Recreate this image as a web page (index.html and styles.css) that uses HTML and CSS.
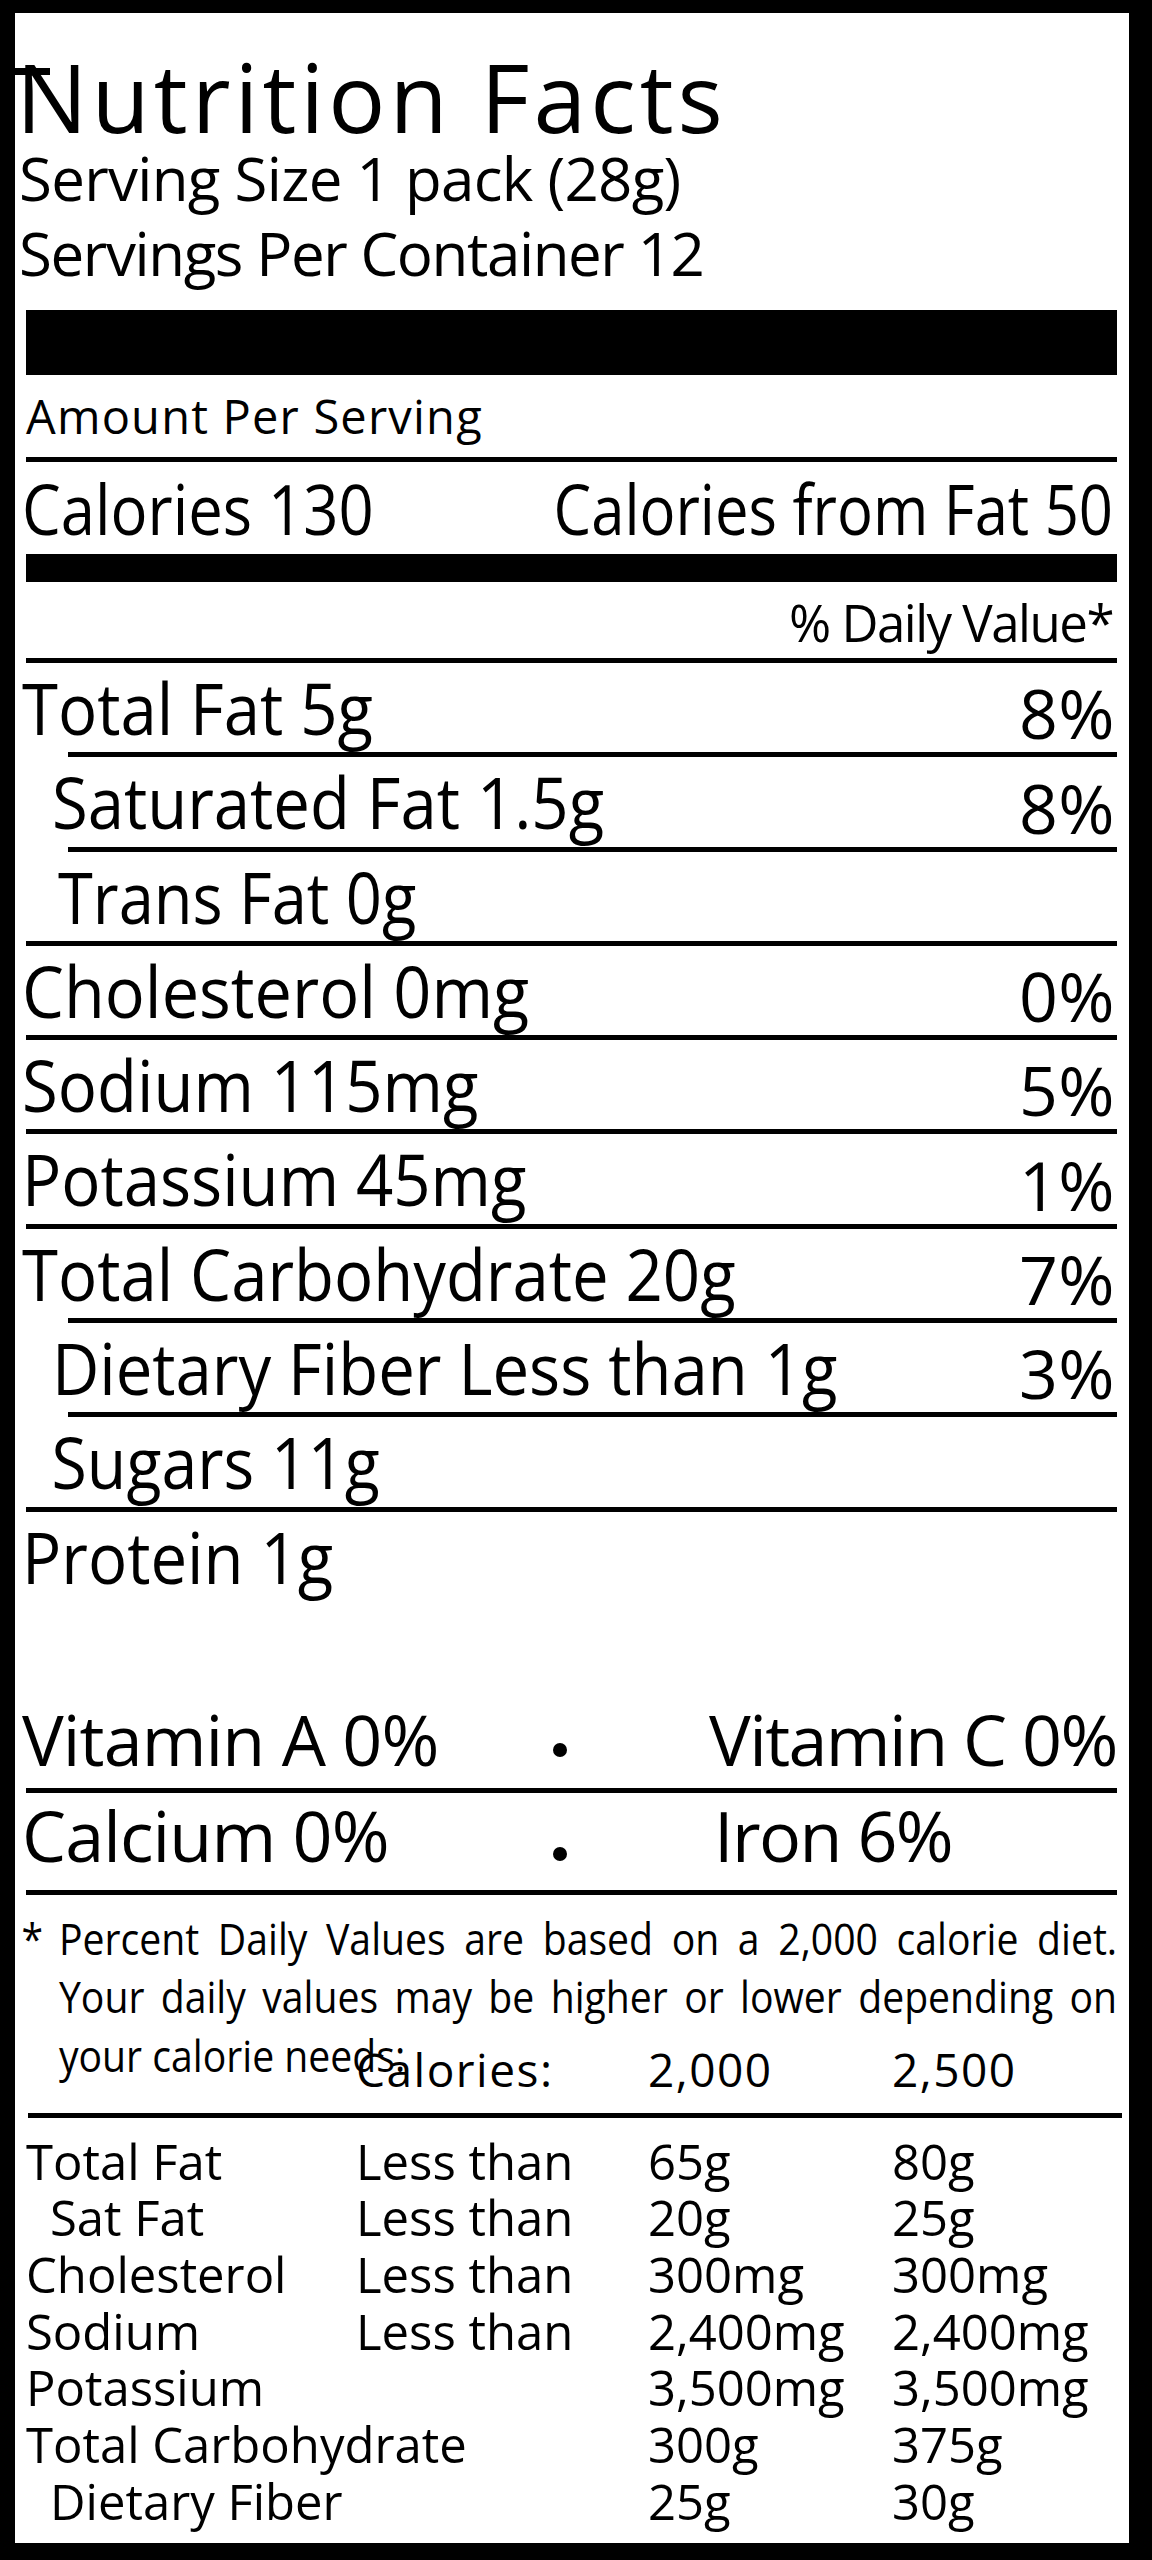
FILE: index.html
```html
<!DOCTYPE html>
<html lang="en">
<head>
<meta charset="utf-8">
<title>Nutrition Facts</title>
<link rel="stylesheet" href="styles.css">
</head>
<body>
<main class="label">
  <h1 class="title">Nutrition Facts</h1>
  <p class="serving serving-size">Serving Size 1 pack (28g)</p>
  <p class="serving serving-count">Servings Per Container 12</p>
  <div class="bar"></div>

  <div class="amount">Amount Per Serving</div>
  <div class="calories">
    <span class="cal-left">Calories 130</span>
    <span class="cal-right">Calories from Fat 50</span>
  </div>
  <div class="dv-head">% Daily Value*</div>

  <ul class="nutrients">
    <li class="row line-ind"><span class="name">Total Fat 5g</span><span class="pct">8%</span></li>
    <li class="row sub line-ind"><span class="name">Saturated Fat 1.5g</span><span class="pct">8%</span></li>
    <li class="row sub"><span class="name n-trans">Trans Fat 0g</span></li>
    <li class="row"><span class="name n-chol">Cholesterol 0mg</span><span class="pct">0%</span></li>
    <li class="row"><span class="name">Sodium 115mg</span><span class="pct">5%</span></li>
    <li class="row"><span class="name">Potassium 45mg</span><span class="pct">1%</span></li>
    <li class="row line-ind"><span class="name">Total Carbohydrate 20g</span><span class="pct">7%</span></li>
    <li class="row sub line-ind"><span class="name">Dietary Fiber Less than 1g</span><span class="pct">3%</span></li>
    <li class="row sub"><span class="name n-sug">Sugars 11g</span></li>
    <li class="row no-line"><span class="name">Protein 1g</span></li>
  </ul>

  <div class="vitamins">
    <div class="vit-row vit-first">
      <span class="vit vit-left">Vitamin A 0%</span>
      <span class="dot dot-mid"></span>
      <span class="vit">Vitamin C 0%</span>
    </div>
    <div class="vit-row vit-second">
      <span class="vit vit-left">Calcium 0%</span>
      <span class="dot dot-low"></span>
      <span class="vit vit-iron">Iron 6%</span>
    </div>
  </div>

  <div class="footnote">
    <p class="fn-line fn-first"><span class="star">*</span>Percent Daily Values are based on a 2,000 calorie diet.</p>
    <p class="fn-line fn-second">Your daily values may be higher or lower depending on</p>
    <p class="fn-line fn-last">your calorie needs:</p>
  </div>

  <div class="cal-head">
    <span></span>
    <span>Calories:</span>
    <span>2,000</span>
    <span>2,500</span>
  </div>
  <div class="rule"></div>

  <div class="dv-table">
    <div class="t-row"><span>Total Fat</span><span>Less than</span><span>65g</span><span>80g</span></div>
    <div class="t-row"><span class="t-ind">Sat Fat</span><span>Less than</span><span>20g</span><span>25g</span></div>
    <div class="t-row"><span>Cholesterol</span><span>Less than</span><span>300mg</span><span>300mg</span></div>
    <div class="t-row"><span>Sodium</span><span>Less than</span><span>2,400mg</span><span>2,400mg</span></div>
    <div class="t-row"><span>Potassium</span><span></span><span>3,500mg</span><span>3,500mg</span></div>
    <div class="t-row"><span>Total Carbohydrate</span><span></span><span>300g</span><span>375g</span></div>
    <div class="t-row"><span class="t-ind">Dietary Fiber</span><span></span><span>25g</span><span>30g</span></div>
  </div>
</main>
</body>
</html>
```

FILE: styles.css
```css
* {
  box-sizing: border-box;
  margin: 0;
  padding: 0;
}

html,
body {
  background: #000;
}

body {
  margin: 0;
  font-family: "Open Sans", "Liberation Sans", sans-serif;
  color: #000;
}

.label {
  position: relative;
  background: #fff;
  margin: 13px 23px 17px 15px;
  height: 2530px;
  padding: 39px 12px 0 11px;
  overflow: hidden;
}

/* small stray mark at the top-left of the title */
.label::before {
  content: "";
  position: absolute;
  left: 0;
  top: 55px;
  width: 35px;
  height: 7px;
  background: #000;
}

/* ---------- header ---------- */
.title {
  font-size: 95px;
  font-weight: 400;
  line-height: 89px;
  letter-spacing: 4px;
  margin-left: -10px;
  white-space: nowrap;
}

.serving {
  font-size: 60px;
  line-height: 75px;
  margin-left: -7px;
  white-space: nowrap;
}

.serving-size {
  letter-spacing: -0.7px;
}

.serving-count {
  letter-spacing: -1.4px;
}

.bar {
  height: 65px;
  margin-top: 19px;
  background: #000;
}

.amount {
  font-size: 47px;
  line-height: 82px;
  letter-spacing: 1.2px;
  border-bottom: 5px solid #000;
  white-space: nowrap;
}

/* condensed lettering: the label's type is narrower than Open Sans */
.calories {
  display: flex;
  justify-content: space-between;
  font-size: 69px;
  line-height: 92px;
  border-bottom: 28px solid #000;
  white-space: nowrap;
}

.cal-left {
  margin-left: -4px;
  transform: scaleX(0.892);
  transform-origin: 0 50%;
}

.cal-right {
  margin-right: 4px;
  transform: scaleX(0.866);
  transform-origin: 100% 50%;
}

.dv-head {
  text-align: right;
  font-size: 51px;
  line-height: 72px;
  padding: 4px 4px 0 0;
  letter-spacing: -1.5px;
  border-bottom: 5px solid #000;
  white-space: nowrap;
}

/* ---------- nutrient rows ---------- */
.nutrients {
  list-style: none;
}

.row {
  display: grid;
  grid-template-columns: 1fr auto;
  align-items: end;
  height: 94.3px;
  padding-bottom: 5px;
  background: linear-gradient(#000, #000) no-repeat left bottom / 100% 5px;
}

.row.line-ind {
  background-position: right bottom;
  background-size: calc(100% - 42px) 5px;
}

.row.no-line {
  height: 89.3px;
  padding-bottom: 0;
  background: none;
}

.name {
  font-size: 72px;
  line-height: 89.3px;
  margin-left: -4px;
  white-space: nowrap;
  transform: scaleX(0.906);
  transform-origin: 0 50%;
}

.row.sub .name {
  padding-left: 33px;
}

.row.sub .n-trans {
  padding-left: 41px;
  transform: scaleX(0.878);
}

.n-chol {
  transform: scaleX(0.925);
}

.row.sub .n-sug {
  transform: scaleX(0.895);
}

.pct {
  font-size: 68px;
  line-height: 78px;
  letter-spacing: 0.5px;
  margin-right: 2px;
  white-space: nowrap;
}

/* ---------- vitamins ---------- */
.vitamins {
  margin-top: 90px;
}

.vit-row {
  display: grid;
  grid-template-columns: 527px 156px 1fr;
  height: 102px;
  font-size: 70px;
  line-height: 84px;
  letter-spacing: -1.6px;
  background: linear-gradient(#000, #000) no-repeat left bottom / 100% 5px;
  white-space: nowrap;
}

.vit-left {
  margin-left: -4px;
  letter-spacing: -0.9px;
}

.vit-iron {
  padding-left: 5px;
}

.vit-first {
  padding: 6.5px 0 11.5px;
}

.vit-second {
  padding: 0 0 18px;
}

.dot {
  width: 14px;
  height: 14px;
  border-radius: 50%;
  background: #000;
  align-self: start;
}

.dot-mid {
  margin-top: 45.5px;
}

.dot-low {
  margin-top: 54px;
}

/* ---------- footnote (laid out wide, then condensed) ---------- */
.footnote {
  margin-top: 13.6px;
  width: 1226px;
  transform: scaleX(0.89);
  transform-origin: 0 0;
}

.fn-line {
  font-size: 44px;
  line-height: 58.5px;
  padding-left: 37px;
  text-align: justify;
  text-align-last: justify;
}

.fn-first {
  text-indent: -42px;
}

.star {
  display: inline-block;
  width: 42px;
  text-indent: 0;
}

.fn-last {
  text-align: left;
  text-align-last: left;
}

/* ---------- daily value table ---------- */
.cal-head,
.t-row {
  display: grid;
  grid-template-columns: 330px 292px 244px 1fr;
  white-space: nowrap;
}

.cal-head {
  margin-top: -56.7px;
  font-size: 46px;
  line-height: 85.6px;
  letter-spacing: 1.5px;
}

.rule {
  height: 5px;
  margin: 0 -5px 0 2px;
  background: #000;
}

.dv-table {
  margin-top: 14.7px;
}

.t-row {
  font-size: 49px;
  line-height: 56.67px;
}

.t-ind {
  padding-left: 24px;
}
```
